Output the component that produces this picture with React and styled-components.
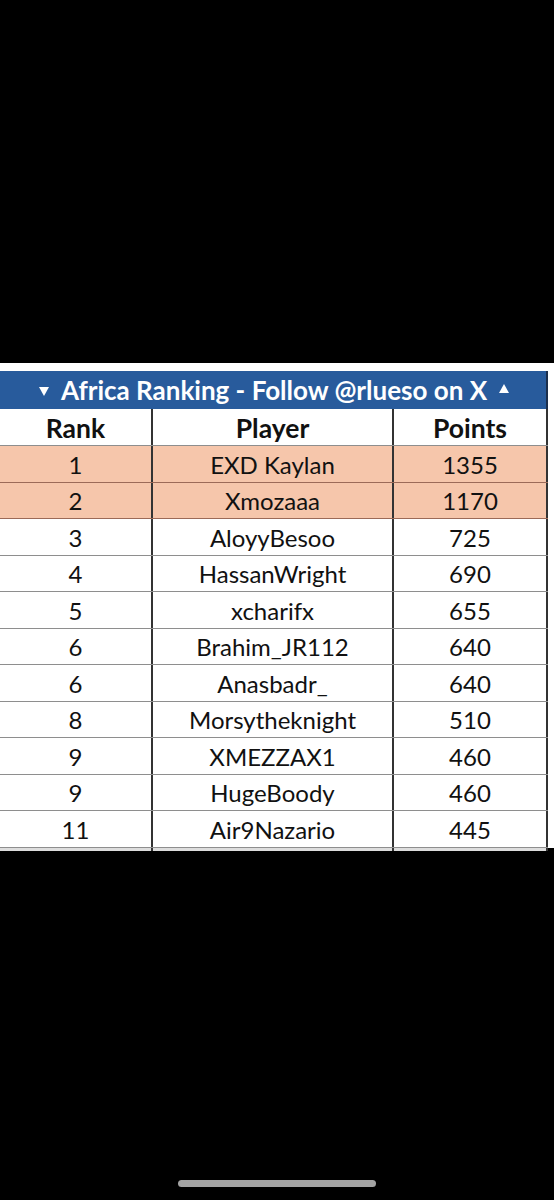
import React from 'react'
import styled, { createGlobalStyle } from 'styled-components'

const Global = createGlobalStyle`
  body {
    margin: 0;
    background: #000;
    font-family: Lato, "Open Sans", sans-serif;
  }
`

const Screen = styled.div`
  width: 554px;
  height: 1200px;
  background: #000;
  display: flex;
  flex-direction: column;
  padding-top: 363px;
  box-sizing: border-box;
  overflow: hidden;
`

const Sheet = styled.div`
  background: #fff;
  padding: 8px 6px 0 0;
  display: flex;
  flex-direction: column;
`

const Title = styled.div`
  height: 38px;
  background: #285b9c;
  border-right: 2px solid #1c2f4c;
  color: #fff;
  font-weight: 700;
  font-size: 26px;
  display: flex;
  align-items: center;
  justify-content: center;
  gap: 12px;
  padding-left: 2px;
  box-sizing: border-box;
`

const Arrow = styled.span`
  width: 0;
  height: 0;
  border-left: 5px solid transparent;
  border-right: 5px solid transparent;
  ${(p) =>
    p.$up
      ? 'border-bottom: 9px solid #fff; margin-bottom: 4px;'
      : 'border-top: 9px solid #fff; margin-top: 2px;'}
`

const Row = styled.div`
  display: grid;
  grid-template-columns: 153px 241px 154px;
  height: ${(p) => (p.$head ? '37px' : '36.5px')};
  background: ${(p) => (p.$hl ? '#f6c6ab' : '#fff')};
  border-bottom: 1.5px solid ${(p) => (p.$hl ? '#9c6a58' : '#8e8e8e')};
  box-sizing: border-box;
`

const Cell = styled.div`
  display: flex;
  align-items: center;
  justify-content: center;
  border-right: 2px solid #333;
  font-size: ${(p) => (p.$bold ? '26.5px' : '24px')};
  font-weight: ${(p) => (p.$bold ? 700 : 400)};
  color: #111;
  padding-top: 1px;
`

const Cut = styled.div`
  display: grid;
  grid-template-columns: 153px 241px 154px;
  height: 3px;
  background: #ddd;
  margin-right: 6px;
  & > div {
    border-right: 2px solid #333;
  }
`

const HomeBar = styled.div`
  width: 198px;
  height: 7px;
  border-radius: 4px;
  background: #a3a3a3;
  margin: auto auto 13px 178px;
`

const rows = [
  [1, 'EXD Kaylan', 1355, true],
  [2, 'Xmozaaa', 1170, true],
  [3, 'AloyyBesoo', 725],
  [4, 'HassanWright', 690],
  [5, 'xcharifx', 655],
  [6, 'Brahim_JR112', 640],
  [6, 'Anasbadr_', 640],
  [8, 'Morsytheknight', 510],
  [9, 'XMEZZAX1', 460],
  [9, 'HugeBoody', 460],
  [11, 'Air9Nazario', 445],
]

export default function App() {
  return (
    <>
      <Global />
      <Screen>
        <Sheet>
          <Title>
            <Arrow />
            <span>Africa Ranking - Follow @rlueso on X</span>
            <Arrow $up />
          </Title>
          <Row $head>
            <Cell $bold>Rank</Cell>
            <Cell $bold>Player</Cell>
            <Cell $bold>Points</Cell>
          </Row>
          {rows.map(([rank, name, pts, hl], i) => (
            <Row key={i} $hl={hl}>
              <Cell>{rank}</Cell>
              <Cell>{name}</Cell>
              <Cell>{pts}</Cell>
            </Row>
          ))}
        </Sheet>
        <Cut>
          <div />
          <div />
          <div />
        </Cut>
        <HomeBar />
      </Screen>
    </>
  )
}
